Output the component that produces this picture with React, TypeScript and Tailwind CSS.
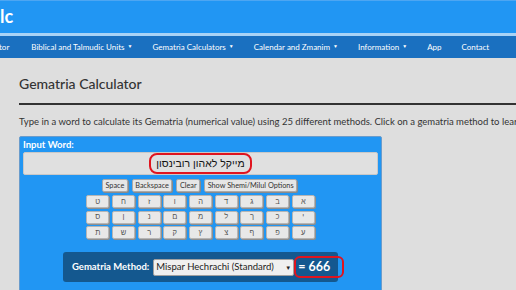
import React from 'react';

const navItems = [
  { label: 'Biblical and Talmudic Units', caret: true },
  { label: 'Gematria Calculators', caret: true },
  { label: 'Calendar and Zmanim', caret: true },
  { label: 'Information', caret: true },
  { label: 'App', caret: false },
  { label: 'Contact', caret: false },
];

const rows = [
  ['א', 'ב', 'ג', 'ד', 'ה', 'ו', 'ז', 'ח', 'ט'],
  ['י', 'כ', 'ך', 'ל', 'מ', 'ם', 'נ', 'ן', 'ס'],
  ['ע', 'פ', 'ף', 'צ', 'ץ', 'ק', 'ר', 'ש', 'ת'],
];

const btn =
  'h-[13px] px-[2.5px] bg-[#e6e6e6] border border-[#a9a9a9] rounded-[2px] shadow-[1px_1px_0_#8a8a8a] text-[7.3px] leading-none text-[#333] flex items-center justify-center';

export default function App() {
  return (
    <div className="w-[516px] h-[290px] overflow-hidden bg-[#dedede] font-['Lato','Liberation_Sans',sans-serif]">
      {/* top bar */}
      <div className="h-[33px] bg-[#2196f3] border-t border-[#4da6f2] flex items-center">
        <span className="text-white font-bold text-[18px] leading-none -mt-[2px]">lc</span>
      </div>
      <div className="h-[3px] bg-[#a9d3f6]" />
      <nav className="h-[22px] bg-[#1a70c0] flex items-center text-white text-[8px] whitespace-nowrap">
        <span className="-ml-[1px] mr-[22px]">tor</span>
        {navItems.map((item) => (
          <span key={item.label} className="mr-[20px] flex items-center">
            {item.label}
            {item.caret && <span className="ml-[3px] text-[5px]">▼</span>}
          </span>
        ))}
      </nav>

      <main className="pl-[19px] pt-[16px]">
        <h1 className="text-[14px] leading-[20px] text-[#333] font-medium">Gematria Calculator</h1>
        <div className="mt-[9px] h-[2px] bg-[#333]" />
        <p className="mt-[11px] text-[9.5px] leading-[12px] text-[#333] whitespace-nowrap">
          Type in a word to calculate its Gematria (numerical value) using 25 different methods. Click on a gematria method to learn more about it.
        </p>

        <section className="mt-[8px] w-[363px] h-[160px] bg-[#2196f3] border border-[#6a9ccc] rounded-t-[2px] px-[3px] pt-[1px]">
          <div className="text-white font-bold text-[9.5px] leading-[13px]">Input Word:</div>
          <div className="mt-[1px] h-[23px] bg-[#e0e0e0] border border-[#c8c8c8] rounded-[2px] flex items-center justify-center">
            <div className="relative px-[6px] text-[10.5px] text-[#111] font-['Liberation_Sans',sans-serif]" dir="rtl">
              מייקל לאהון רובינסון
              <span className="absolute -inset-x-[1px] -inset-y-[3px] border-2 border-[#e0141e] rounded-[8px]" />
            </div>
          </div>

          <div className="mt-[4px] flex justify-center gap-[4px] pr-[2px]">
            <button className={btn}>Space</button>
            <button className={btn}>Backspace</button>
            <button className={btn}>Clear</button>
            <button className={btn}>Show Shemi/Milul Options</button>
          </div>

          <div className="mt-[3px] flex flex-col items-center gap-[2.5px]">
            {rows.map((row, i) => (
              <div key={i} dir="rtl" className="flex gap-[2.7px]">
                {row.map((l) => (
                  <div
                    key={l}
                    className="w-[23px] h-[13px] bg-[#e8e8e8] border border-[#b5b5b5] rounded-[2px] shadow-[1px_1px_0_#8f8f8f] text-[7.5px] text-[#555] flex items-center justify-center font-['Liberation_Sans',sans-serif]"
                  >
                    {l}
                  </div>
                ))}
              </div>
            ))}
          </div>

          <div className="mt-[13px] mx-auto w-[275px] h-[30px] bg-[#14588f] rounded-[3px] flex items-center pl-[9px]">
            <span className="text-white font-bold text-[9.5px] mr-[4px]">Gematria Method:</span>
            <div className="w-[141px] h-[17px] bg-[#f0f0f0] border border-[#a0a0a0] rounded-[2px] flex items-center justify-between pl-[2px] pr-[2px] text-[9.5px] text-[#222]">
              <span>Mispar Hechrachi (Standard)</span>
              <span className="text-[6px]">▼</span>
            </div>
            <span className="relative ml-[4px] text-white font-bold text-[12.5px] leading-none">
              = 666
              <span className="absolute -left-[4px] -right-[14px] -top-[5px] -bottom-[5px] border-2 border-[#e0141e] rounded-[6px]" />
            </span>
          </div>
        </section>
      </main>
    </div>
  );
}
